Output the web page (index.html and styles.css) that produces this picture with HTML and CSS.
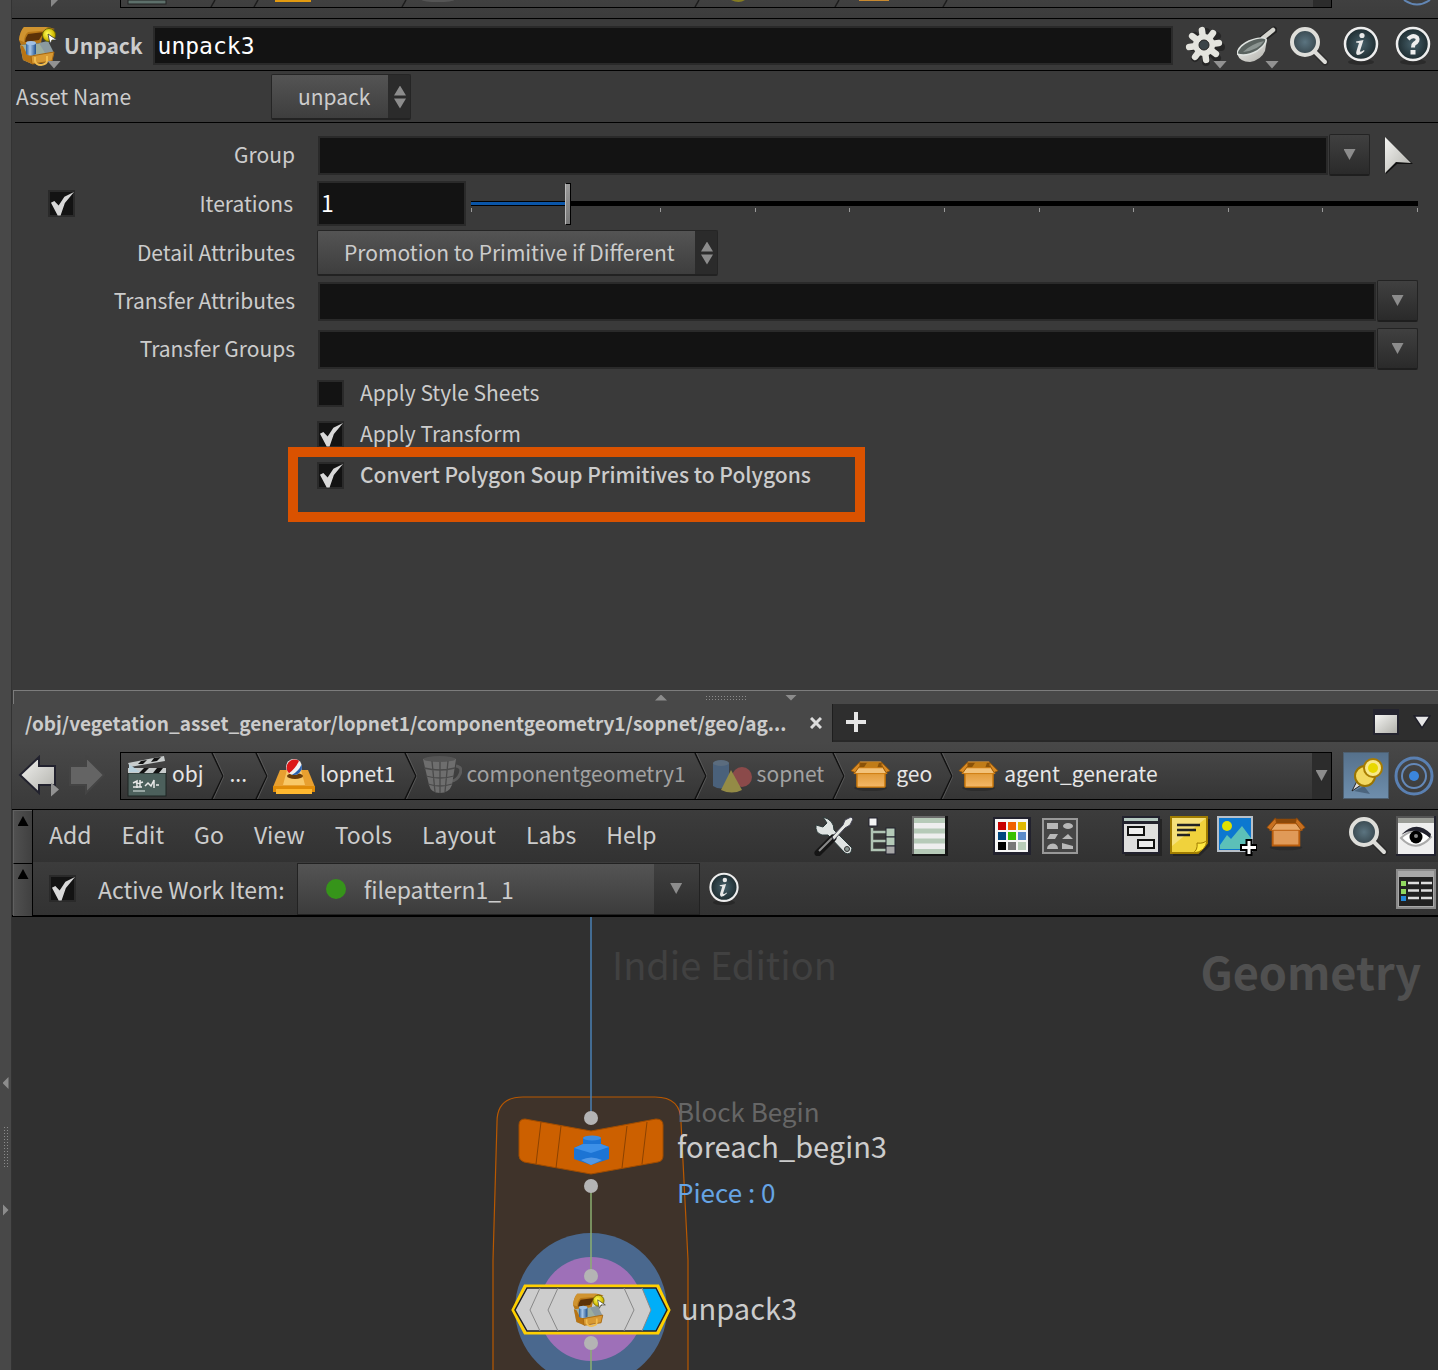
FILE: index.html
```
<!DOCTYPE html>
<html lang="en">
<head>
    <meta charset="UTF-8">
    <title>unpack3</title>
    <link rel="stylesheet" href="styles.css">
</head>
<body>
<!-- shared gradients and symbols -->
<svg class="defs" width="0" height="0" aria-hidden="true">
    <defs>
        <linearGradient id="g-steel" x1="0" y1="0" x2="1" y2="1"><stop offset="0" stop-color="#f4f4f2"/><stop offset="1" stop-color="#b0b0aa"/></linearGradient>
        <linearGradient id="g-gold" x1="0" y1="0" x2="0" y2="1"><stop offset="0" stop-color="#e09a38"/><stop offset="1" stop-color="#f4b868"/></linearGradient>
        <linearGradient id="g-blue" x1="0" y1="0" x2="1" y2="0"><stop offset="0" stop-color="#2a5f9e"/><stop offset=".4" stop-color="#a9c8e8"/><stop offset="1" stop-color="#1d4f90"/></linearGradient>
        <radialGradient id="g-glass"><stop offset="0" stop-color="#5b7480"/><stop offset="1" stop-color="#37464d"/></radialGradient>
        <radialGradient id="g-dark"><stop offset="0" stop-color="#46606a"/><stop offset="1" stop-color="#1e2c30"/></radialGradient>
        <radialGradient id="g-yellow" cx=".4" cy=".4"><stop offset="0" stop-color="#ffff5a"/><stop offset="1" stop-color="#d0b800"/></radialGradient>
    </defs>
    <symbol id="i-chest" viewBox="0 0 40 40">
        <path d="M5 1Q1 5 0 14L2 19L22 17L24 7L36 3Q30 1 28 1L9 1Z" fill="#b87818"/>
        <path d="M5 1Q1 5 0 14L5 16Q5 9 9 6L32 4L27 1L9 1Z" fill="#d09430"/>
        <path d="M9 8Q6 12 6 16L20 14L25 6Z" fill="#5c3208"/>
        <path d="M1 19L24 17L35 27L33 35L13 38L4 34Z" fill="#9cae9f"/>
        <path d="M20 17L29 15L35 27L26 27Z" fill="#8b9aa0"/>
        <path d="M1 19L4 34L13 38L13 30L7 26L4 20Z" fill="#b87414"/>
        <path d="M12 30L35 26L33 35L13 38Z" fill="#d89a34" stroke="#a8660c"/>
        <path d="M16 31V35Q17 39 22 39Q28 38 28 35V30" fill="none" stroke="#f0bc50" stroke-width="2"/>
        <path d="M7 17V28Q11 31 17 28V17Z" fill="url(#g-blue)"/>
        <ellipse cx="12" cy="17" rx="5" ry="2" fill="#9fc0e4"/>
        <circle cx="30" cy="9" r="6.500" fill="url(#g-yellow)" stroke="#6a6400"/>
        <path d="M29 8L38 14L33 14L31 18Z" fill="#fff" stroke="#333" stroke-width=".8"/>
    </symbol>
    <symbol id="i-mag" viewBox="0 0 40 40">
        <path d="M26 26L36 36" stroke="#1b1b1b" stroke-width="7" stroke-linecap="round" opacity=".4"/>
        <path d="M25 25L36 36" stroke="#dcdcd8" stroke-width="4" stroke-linecap="round"/>
        <circle cx="16" cy="16" r="13" fill="url(#g-glass)" stroke="#dededa" stroke-width="4"/>
    </symbol>
    <symbol id="i-info" viewBox="0 0 40 40">
        <ellipse cx="20" cy="36" rx="13" ry="3" fill="#222" opacity=".6"/>
        <circle cx="20" cy="18" r="16" fill="url(#g-dark)" stroke="#eee" stroke-width="2.500"/>
        <circle cx="21" cy="9.500" r="2.600" fill="#e8e8e8"/>
        <path d="M15 15.500L22.500 14L19 25Q19 27 23 24L23.500 25Q20 29 16.500 29Q14.500 28 15.500 25L18 17L15 16.500Z" fill="#e8e8e8"/>
    </symbol>
    <symbol id="i-box" viewBox="0 0 42 32">
        <ellipse cx="21" cy="29" rx="17" ry="3" fill="#222" opacity=".5"/>
        <path d="M7 13H36V27Q36 28 35 28H8Q7 28 7 27Z" fill="url(#g-gold)" stroke="#c87608" stroke-width="1.500"/>
        <path d="M10 2H32L34 9H8Z" fill="#8a5208" stroke="#e8a040"/>
        <path d="M18 2H30L28 8H14Z" fill="#c07c18"/>
        <path d="M8 8H34L38 14H4Z" fill="#f2c27a" stroke="#cf7d10"/>
        <path d="M10 2L1 11L5 13L10 6ZM32 2L41 11L37 13L33 6Z" fill="#d98a24" stroke="#9a5a08"/>
    </symbol>
    <symbol id="i-sep" viewBox="0 0 13 46" preserveAspectRatio="none">
        <path d="M1 0L12 23L1 46" fill="none" stroke="#111" stroke-width="1.500"/>
        <path d="M2.500 0L13 23L2.500 46" fill="none" stroke="#666" stroke-width=".7"/>
    </symbol>
</svg>

<aside class="pane-edge">
    <div class="edge-grip">
        <i class="tri-left"></i>
        <i class="dots"></i>
        <i class="tri-right"></i>
    </div>
</aside>

<main class="desk">
    <section class="params">
        <!-- bottom edge of the parameter pane path bar -->
        <div class="path-stub">
            <div class="stub-nav"><i class="stub-tri"></i></div>
            <div class="stub-box">
                <svg width="1000" height="7" viewBox="0 0 1000 7">
                    <rect x="7" y="0" width="38" height="4" fill="#5d706b" stroke="#222"/>
                    <path d="M94 0L90 7M137 0L133 7M285 0L281 7M578 0L574 7M718 0L714 7M826 0L822 7" stroke="#1c1c1c" stroke-width="1.500"/>
                    <rect x="154" y="0" width="36" height="2" fill="#e39a10"/>
                    <ellipse cx="317" cy="0" rx="16" ry="2" fill="#555"/>
                    <path d="M610 0Q618 4 624 0" fill="#857c22"/>
                    <rect x="738" y="0" width="30" height="1" fill="#c98a30"/>
                </svg>
            </div>
            <svg class="stub-ring" width="42" height="8" viewBox="0 0 42 8"><path d="M8 0Q21 9 34 0" fill="none" stroke="#6286b4" stroke-width="2"/></svg>
        </div>

        <header class="node-head">
            <button class="node-type" aria-label="Node type">
                <svg width="40" height="40"><use href="#i-chest"/></svg>
                <i class="tri-mini"></i>
            </button>
            <label class="node-label" for="node-name">Unpack</label>
            <input class="node-name" id="node-name" type="text" value="unpack3" spellcheck="false">
            <div class="head-tools">
                <button aria-label="Gear menu">
                    <svg width="40" height="40" viewBox="0 0 40 40">
                        <g stroke="#1a1a1a" stroke-width="8" stroke-linecap="round" opacity=".6"><path d="M21 6V36M6 21H36M10 10L32 32M32 10L10 32"/></g>
                        <g transform="rotate(-8 19 19)" stroke="#e4e4de" stroke-width="6.500" stroke-linecap="round"><path d="M19 4V34M4 19H34M8.500 8.500L29.500 29.500M29.500 8.500L8.500 29.500"/></g>
                        <circle cx="19" cy="19" r="11" fill="#e4e4de"/>
                        <circle cx="19" cy="19" r="5" fill="#3b4448" stroke="#222"/>
                    </svg>
                    <i class="tri-mini"></i>
                </button>
                <button aria-label="Takes">
                    <svg width="40" height="40" viewBox="0 0 40 40">
                        <path d="M25 13L37 4" stroke="#222" stroke-width="7" stroke-linecap="round"/>
                        <path d="M26 12L36 4" stroke="#d4d4ce" stroke-width="4.500" stroke-linecap="round"/>
                        <path d="M0 28Q3 36 13 36Q24 34 28 25L30 13Z" fill="url(#g-steel)"/>
                        <path d="M0 28Q1 20 12 15Q25 10 29 13Q30 18 20 25Q9 31 0 28Z" fill="#59625f" stroke="#dfe3e0" stroke-width="1.500"/>
                        <path d="M6 26Q14 18 27 15Q22 24 6 26Z" fill="#8b9491"/>
                    </svg>
                    <i class="tri-mini"></i>
                </button>
                <button aria-label="Search"><svg width="40" height="40"><use href="#i-mag"/></svg></button>
                <button aria-label="Info"><svg width="40" height="40"><use href="#i-info"/></svg></button>
                <button aria-label="Help">
                    <svg width="40" height="40" viewBox="0 0 40 40">
                        <ellipse cx="20" cy="36" rx="13" ry="3" fill="#222" opacity=".6"/>
                        <circle cx="20" cy="18" r="16" fill="url(#g-dark)" stroke="#eee" stroke-width="2.500"/>
                        <path d="M15 13Q20 8 24 11.500Q26 15 21.500 17.500Q20 18.500 20 21.500" fill="none" stroke="#eee" stroke-width="4"/>
                        <rect x="17.500" y="24" width="5" height="4.500" fill="#eee"/>
                    </svg>
                </button>
            </div>
        </header>

        <div class="asset-row">
            <label for="asset">Asset Name</label>
            <div class="drop">
                <select id="asset"><option>unpack</option></select>
                <i class="spin"></i>
            </div>
        </div>

        <form class="parm-list">
            <div class="parm">
                <label class="parm-label" for="group">Group</label>
                <input class="field" id="group" type="text">
                <button class="menu-btn" type="button" aria-label="Group menu"><i class="tri-down"></i></button>
                <button class="pick" type="button" aria-label="Select group">
                    <svg width="32" height="40" viewBox="0 0 32 40"><path d="M4 4L31 29L15 29L4 39Z" fill="#111"/><path d="M3 2L29 28L14 27L3 38Z" fill="url(#g-steel)"/></svg>
                </button>
            </div>
            <div class="parm tall">
                <input class="tick" type="checkbox" checked aria-label="Enable iterations">
                <label class="parm-label" for="iter">Iterations</label>
                <input class="field num" id="iter" type="text" value="1">
                <div class="slider">
                    <input type="range" min="0" max="10" value="1" aria-label="Iterations">
                    <div class="ticks"><i></i><i></i><i></i><i></i><i></i><i></i><i></i><i></i><i></i><i></i><i></i></div>
                </div>
            </div>
            <div class="parm tall">
                <label class="parm-label" for="detail">Detail Attributes</label>
                <div class="drop wide">
                    <select id="detail"><option>Promotion to Primitive if Different</option></select>
                    <i class="spin"></i>
                </div>
            </div>
            <div class="parm">
                <label class="parm-label" for="tattr">Transfer Attributes</label>
                <input class="field" id="tattr" type="text">
                <button class="menu-btn" type="button" aria-label="Attributes menu"><i class="tri-down"></i></button>
            </div>
            <div class="parm">
                <label class="parm-label" for="tgroup">Transfer Groups</label>
                <input class="field" id="tgroup" type="text">
                <button class="menu-btn" type="button" aria-label="Groups menu"><i class="tri-down"></i></button>
            </div>
            <div class="toggles">
                <label><input class="tick" type="checkbox">Apply Style Sheets</label>
                <label><input class="tick" type="checkbox" checked>Apply Transform</label>
                <label class="changed"><input class="tick" type="checkbox" checked>Convert Polygon Soup Primitives to Polygons</label>
                <div class="callout"></div>
            </div>
        </form>
    </section>

    <div class="splitter"><i class="tri-up"></i><i class="dots"></i><i class="tri-dn"></i></div>

    <section class="network">
        <div class="tabs">
            <div class="tab">
                <span>/obj/vegetation_asset_generator/lopnet1/componentgeometry1/sopnet/geo/ag...</span>
                <button aria-label="Close tab"><svg width="12" height="12" viewBox="0 0 12 12"><path d="M1 1L11 11M11 1L1 11" stroke="#ddd" stroke-width="3"/></svg></button>
            </div>
            <button class="tab-add" aria-label="New tab"><svg width="20" height="20" viewBox="0 0 20 20"><path d="M10 0V20M0 10H20" stroke="#e6e6e6" stroke-width="4"/></svg></button>
            <div class="tab-tools">
                <button aria-label="Maximize"><svg width="26" height="26" viewBox="0 0 26 26"><rect width="26" height="26" fill="#24242f"/><rect x="2" y="6" width="22" height="18" fill="url(#g-steel)"/></svg></button>
                <button aria-label="Pane menu"><svg width="18" height="16" viewBox="0 0 18 16"><path d="M1 2H17L9 14Z" fill="#e6e6e6" stroke="#1e1e28" stroke-width="1.500"/></svg></button>
            </div>
        </div>

        <nav class="path-bar">
            <button class="go" aria-label="Back">
                <svg width="40" height="42" viewBox="0 0 40 42"><path d="M2 20L21 2V11H37V30H21V38Z" fill="url(#g-steel)" stroke="#22222e" stroke-width="2"/></svg>
                <i class="tri-side"></i>
            </button>
            <button class="go" aria-label="Forward">
                <svg width="40" height="42" viewBox="0 0 40 42"><path d="M37 20L19 2V11H3V30H19V38Z" fill="#646464" stroke="#444" stroke-width="2"/></svg>
            </button>
            <div class="crumbs">
                <a href="#obj">
                    <svg width="40" height="42" viewBox="0 0 40 42">
                        <rect x="1" y="18" width="38" height="23" fill="#4c605c" stroke="#1c2422"/>
                        <path d="M1 13H39V18H1Z" fill="#c8cccc"/><path d="M12 18L17 13H22L17 18ZM26 18L30 13H36L32 18Z" fill="#111"/>
                        <path d="M1 8L37 1L38 6L3 12Z" fill="#c8cccc"/><path d="M11 9L14 6L20 5L16 9ZM24 7L27 3L34 2L30 6Z" fill="#111"/>
                        <path d="M2 9L13 17H2Z" fill="#b8d0dc"/>
                        <path d="M6 28L10 26V33M13 25V32M9 29L16 27M18 31L21 28L24 31L27 25V33M6 32H15M29 30H32" fill="none" stroke="#e8e8e8" stroke-width="1.500"/>
                        <path d="M6 36H18" stroke="#96a5a2" stroke-width="2"/>
                    </svg>
                    <span>obj</span></a>
                <svg class="sep" width="13" height="46"><use href="#i-sep"/></svg>
                <a href="#more"><span>...</span></a>
                <svg class="sep" width="13" height="46"><use href="#i-sep"/></svg>
                <a href="#lopnet1">
                    <svg width="42" height="40" viewBox="0 0 42 40">
                        <path d="M7 14H35L42 31V34H0V31Z" fill="#e8a030"/>
                        <path d="M14 14H28L32 29H10Z" fill="#f8c868"/>
                        <path d="M0 30H42V36H0Z" fill="#e08c08"/><path d="M3 33H39V38H3Z" fill="#ffb830"/>
                        <ellipse cx="22" cy="20" rx="8" ry="3" fill="#6a3c08"/>
                        <circle cx="21" cy="11" r="8" fill="#f2f2f2"/>
                        <path d="M16 17.200A8 8 0 0 1 26 4.800Q23 12 16 17.200Z" fill="#dc1818"/>
                        <path d="M28.500 8.500A8 8 0 0 1 19 18.700Q26 15 28.500 8.500Z" fill="#2860b0"/>
                    </svg>
                    <span>lopnet1</span></a>
                <svg class="sep" width="13" height="46"><use href="#i-sep"/></svg>
                <a class="dim" href="#componentgeometry1">
                    <svg width="40" height="42" viewBox="0 0 40 42">
                        <path d="M34 11Q41 12 38 19Q35 26 29 26" fill="none" stroke="#5c5c5c" stroke-width="3"/>
                        <path d="M1 4Q18 0 34 4L30 30Q27 38 18 38Q9 38 7 30Z" fill="#6e6e6e"/>
                        <ellipse cx="17.500" cy="4" rx="16" ry="3" fill="#555"/>
                        <path d="M10 6L13 37M18 7V38M26 6L23 37M2 13Q18 17 33 13M4 21Q18 25 32 21M6 29Q18 33 30 29" fill="none" stroke="#4a4a4a" stroke-width="1.300"/>
                    </svg>
                    <span>componentgeometry1</span></a>
                <svg class="sep" width="13" height="46"><use href="#i-sep"/></svg>
                <a class="dim" href="#sopnet">
                    <svg width="40" height="36" viewBox="0 0 40 36">
                        <path d="M1 5V28Q9 33 17 28V5Z" fill="#4a617b"/><ellipse cx="9" cy="5" rx="8" ry="3" fill="#5b6c7e"/>
                        <circle cx="30" cy="19" r="10" fill="#8b4a4a"/>
                        <path d="M19 12L30 32Q20 37 9 32Z" fill="#948b46"/>
                    </svg>
                    <span>sopnet</span></a>
                <svg class="sep" width="13" height="46"><use href="#i-sep"/></svg>
                <a href="#geo"><svg width="41" height="31"><use href="#i-box"/></svg><span>geo</span></a>
                <svg class="sep" width="13" height="46"><use href="#i-sep"/></svg>
                <a href="#agent_generate"><svg width="41" height="31"><use href="#i-box"/></svg><span>agent_generate</span></a>
                <button class="crumb-menu" aria-label="Path history"><i class="tri-down"></i></button>
            </div>
            <button class="pin" aria-label="Pin">
                <svg width="44" height="44" viewBox="0 0 44 44">
                    <path d="M10 37L26 40L20 32Z" fill="#3e566c" opacity=".7"/>
                    <path d="M8 37L13 27L17 31Z" fill="#ddd" stroke="#222"/>
                    <circle cx="21" cy="22" r="10" fill="#f2d860" stroke="#9a7400" stroke-width="2"/>
                    <circle cx="29" cy="14" r="9" fill="#f8e888" stroke="#a87c00" stroke-width="2"/>
                    <circle cx="29" cy="14" r="5" fill="#e8d800"/>
                </svg>
            </button>
            <button class="link" aria-label="Link group">
                <svg width="42" height="42" viewBox="0 0 42 42" fill="none">
                    <circle cx="21" cy="21" r="18" stroke-width="3" stroke="#5a80b2"/><circle cx="21" cy="21" r="12" stroke-width="2" stroke="#6488b8"/><circle cx="21" cy="21" r="5" fill="#3b86dc"/>
                </svg>
            </button>
        </nav>

        <div class="bars">
            <div class="grips"><button aria-label="Collapse menu bar"></button><button aria-label="Collapse work item bar"></button></div>
            <div class="bar-rows">
                <div class="menu-bar">
                    <nav class="menus">
                        <a href="#add">Add</a><a href="#edit">Edit</a><a href="#go">Go</a><a href="#view">View</a><a href="#tools">Tools</a><a href="#layout">Layout</a><a href="#labs">Labs</a><a href="#help">Help</a>
                    </nav>
                    <div class="tools">
                        <button aria-label="Tools">
                            <svg width="40" height="40" viewBox="0 0 40 40">
                                <path d="M9 1L13 7L9 11L2 9Q1 17 8 19L14 19L31 37Q37 40 38 32L20 14Q20 4 9 1Z" fill="#dfe3e2" stroke="#2c3a3a"/>
                                <circle cx="33" cy="33" r="2.500" fill="#8a9692" stroke="#333"/>
                                <path d="M4 37L19 22" stroke="#151515" stroke-width="7" stroke-linecap="round"/><path d="M5 35L18 22" stroke="#8a8a8a" stroke-width="2"/>
                                <path d="M18 21L29 9L31 4L37 1L39 3L36 9L31 12L20 24Z" fill="#e6e8e4" stroke="#445"/>
                            </svg>
                        </button>
                        <button aria-label="Tree view">
                            <svg width="32" height="40" viewBox="0 0 32 40">
                                <rect x="3" y="2" width="8" height="8" fill="#f4f4f4" stroke="#22222e"/>
                                <path d="M6 12V34H22M6 16H22M6 25H22" fill="none" stroke="#b0c4b4" stroke-width="2.500"/>
                                <g fill="#b4cab8" stroke="#22222e"><rect x="20" y="12" width="9" height="9"/><rect x="20" y="21" width="9" height="9"/><rect x="20" y="30" width="9" height="8" fill="#a6a6a6"/></g>
                            </svg>
                        </button>
                        <button aria-label="List view">
                            <svg width="36" height="40" viewBox="0 0 36 40"><rect width="36" height="40" fill="#151515"/><rect width="33" height="38" fill="#6a6a6a"/><rect x="2" y="2" width="31" height="36" fill="#eee"/><path d="M2 4.500H33M2 15H33M2 25H33M2 35.500H33" stroke="#b6cab8" stroke-width="5"/></svg>
                        </button>
                        <button class="gap-wide" aria-label="Color palette">
                            <svg width="38" height="38" viewBox="0 0 38 38"><rect width="38" height="38" fill="#22222e"/><rect x="2" y="2" width="33" height="33" fill="#f6f6f6"/>
                                <rect x="5" y="5" width="8" height="8" fill="#c80000"/><rect x="15" y="5" width="8" height="8" fill="#f06000"/><rect x="25" y="5" width="8" height="8" fill="#e0b800"/>
                                <rect x="5" y="15" width="8" height="8" fill="#004880"/><rect x="15" y="15" width="8" height="8" fill="#38c000"/><rect x="25" y="15" width="8" height="8" fill="#5a8ac8"/>
                                <rect x="5" y="25" width="8" height="8" fill="#000"/><rect x="15" y="25" width="8" height="8" fill="#787878"/><rect x="25" y="25" width="8" height="8" fill="#b8ccb8"/>
                            </svg>
                        </button>
                        <button aria-label="Node shapes">
                            <svg width="36" height="36" viewBox="0 0 36 36"><rect x="1" y="1" width="34" height="34" fill="#464646" stroke="#989898" stroke-width="2"/><g fill="#b8b8b8"><rect x="5" y="5" width="11" height="6"/><ellipse cx="26" cy="8" rx="5" ry="3"/><path d="M8 16H16L13 21H5ZM26 16L31 21H20ZM5 31Q5 26 11 25.500Q16 26 16 31ZM20 25L31 28V31H20Z"/></g></svg>
                        </button>
                        <button class="gap-wide" aria-label="Network box">
                            <svg width="40" height="40" viewBox="0 0 40 40"><rect x="3" y="3" width="37" height="37" fill="#242424"/><rect width="38" height="38" fill="#22222e"/><rect x="2" y="2" width="34" height="3" fill="#b4c8c0"/><rect x="2" y="8" width="34" height="28" fill="#dedede"/><g fill="#eee" stroke="#111" stroke-width="2"><rect x="6" y="11" width="16" height="8"/><rect x="16" y="24" width="16" height="8"/></g></svg>
                        </button>
                        <button aria-label="Sticky note">
                            <svg width="40" height="40" viewBox="0 0 40 40"><path d="M3 3H40V30L30 40H3Z" fill="#262626"/><path d="M1 1H37V27L28 37H1Z" fill="#f0d23c" stroke="#a07c00" stroke-width="2"/><path d="M2 2H36L2 30Z" fill="#f8e488" opacity=".8"/><path d="M37 24Q34 28 27 27Q28 34 23 37Q36 36 37 24Z" fill="#ffe840" stroke="#a07c00"/><path d="M7 9H30M7 14H26M7 19H20" stroke="#222" stroke-width="2.500"/></svg>
                        </button>
                        <button aria-label="Background image">
                            <svg width="42" height="40" viewBox="0 0 42 40"><rect x="1" y="1" width="34" height="34" fill="#0c78d0" stroke="#b8c0c8" stroke-width="2"/><circle cx="10" cy="10" r="5" fill="#e0e000"/><path d="M3 29L10 19L14 23L25 10L34 22V33H3Z" fill="#5cc0b8"/><path d="M32 23V40M23 31.500H40" stroke="#000" stroke-width="7"/><path d="M32 25V38M25 31.500H39" stroke="#fff" stroke-width="3"/></svg>
                        </button>
                        <button aria-label="Asset"><svg width="40" height="40" viewBox="0 4 42 40">
                            <ellipse cx="21" cy="36" rx="17" ry="3" fill="#222" opacity=".5"/><path d="M7 16H35V34H7Z" fill="#e09a58" stroke="#b85c0c" stroke-width="2"/><path d="M10 6H32L35 11H7Z" fill="#8c4808"/><path d="M7 11H35L38 18H4Z" fill="#e8a868" stroke="#b85c0c"/><path d="M10 5L1 15L5 18L11 10ZM32 5L41 15L37 18L31 10Z" fill="#c87020" stroke="#8c4808"/>
                        </svg></button>
                        <button class="gap-wide" aria-label="Find"><svg width="40" height="40"><use href="#i-mag"/></svg></button>
                        <button aria-label="Display options">
                            <svg width="40" height="40" viewBox="0 0 40 40"><rect width="40" height="40" fill="#22222e"/><rect width="38" height="38" fill="#555"/><rect x="2" y="2" width="36" height="36" fill="#eee"/><rect x="2" y="2" width="36" height="5" fill="#9a9c96"/><path d="M5 22Q20 8 35 21Q20 38 5 22Z" fill="#fff" stroke="#aaa" stroke-width="2"/><circle cx="20" cy="21" r="6.500" fill="#000"/><circle cx="20" cy="20" r="2" fill="#888"/><path d="M5 19Q20 3 35 18L34 22Q20 9 5 19Z" fill="#22222e"/></svg>
                        </button>
                    </div>
                </div>
                <div class="work-bar">
                    <label class="active-item"><input class="tick" type="checkbox" checked>Active Work Item:</label>
                    <button class="work-menu"><i class="dot"></i>filepattern1_1<span class="work-arrow"><i class="tri-down"></i></span></button>
                    <button class="work-info" aria-label="Work item info"><svg width="34" height="34"><use href="#i-info"/></svg></button>
                    <button class="work-list" aria-label="Work item list">
                        <svg width="40" height="40" viewBox="0 0 40 40"><rect width="40" height="40" fill="#8a8a8a"/><rect x="2" y="2" width="36" height="36" fill="#a8a8a8"/><rect x="3" y="8" width="34" height="29" fill="#222"/><path d="M12 14H23M25 14H36M12 21.500H23M25 21.500H36M12 29H23M25 29H36" stroke="#ddd" stroke-width="2.500"/><rect x="5" y="12" width="5" height="5" fill="#90d860"/><rect x="5" y="20" width="5" height="5" fill="#90d860"/><rect x="5" y="27" width="5" height="5" fill="#2488d8"/></svg>
                    </button>
                </div>
            </div>
        </div>

        <div class="canvas">
            <div class="edition">Indie Edition</div>
            <div class="context">Geometry</div>
            <!-- foreach block, wires and the two nodes -->
            <svg class="graph" width="220" height="453" viewBox="0 0 220 453">
                <path d="M13 470V343L17 205Q17 180 43 180H175Q201 180 201 205L208 343V470Z" fill="#3f332a" stroke="#b85800" stroke-width="1.200"/>
                <path d="M111 0V200" stroke="#4a80b4" stroke-width="1.500"/>
                <circle cx="111" cy="392" r="76" fill="#4a688e"/>
                <circle cx="111" cy="392" r="52" fill="#9e70b8"/>
                <path d="M111 270V358M111 426V453" stroke="#8aae70" stroke-width="1.500"/>
                <path d="M45 202L111 214L176 202Q183 202 183 208V239Q183 244 178 245L111 257L44 245Q39 243 39 239V208Q39 202 45 202Z" fill="#cc6000" stroke="#a04c00"/>
                <path d="M61 205L56 247M81 209L76 251M147 209L142 251M167 205L162 247" stroke="#8c4200" fill="none"/>
                <path d="M94 231L103 227V221Q111 217 121 221V227L129 230V242L111 248L94 242Z" fill="#1c74d4"/>
                <ellipse cx="112" cy="221" rx="9" ry="2.500" fill="#3c8ce0"/>
                <path d="M94 231L111 236L129 230L121 227H103Z" fill="#3c90e8"/>
                <path d="M101 243Q111 238 122 243L111 248Z" fill="#6aa8ec" opacity=".7"/>
                <path d="M45 369H178L189 393L178 416H45L33 393Z" fill="#cdcdcd" stroke="#ffd000" stroke-width="3"/>
                <path d="M162 371H176L187 393L176 414H162L171 393Z" fill="#00aef8"/>
                <path d="M47 371H176L187 393L176 414H47L35 393Z" fill="none" stroke="#222" stroke-width="1.500"/>
                <path d="M60 371L50 393L60 414M78 371L68 393L78 414M144 371L154 393L144 414M162 371L171 393L162 414" fill="none" stroke="#888"/>
                <use href="#i-chest" x="93" y="376" width="34" height="34"/>
                <g fill="#b4b4b4"><circle cx="111" cy="201" r="7"/><circle cx="111" cy="269" r="7"/><circle cx="111" cy="359" r="7"/><circle cx="111" cy="426" r="7"/></g>
            </svg>
            <div class="node-text begin"><p class="kind">Block Begin</p><p>foreach_begin3</p><p class="piece">Piece : 0</p></div>
            <div class="node-text unpack"><p>unpack3</p></div>
        </div>
    </section>
</main>
</body>
</html>
```
FILE: styles.css
```
*{
    box-sizing: border-box;
}
body{
    margin: 0;
    min-height: 100vh;
    display: flex;
    background: #3a3a3a;
    color: #ccc;
    font-family: "Noto Sans CJK SC", "Open Sans", sans-serif;
    font-size: 21px;
    line-height: 32px;
    overflow-x: hidden;
}
button, input, select{
    margin: 0;
    padding: 0;
    border: 0;
    background: none;
    color: inherit;
    font: inherit;
}
button{
    display: flex;
    align-items: center;
    justify-content: center;
    position: relative;
}
a{
    color: inherit;
    text-decoration: none;
}
p{
    margin: 0;
}
svg{
    display: block;
    flex: none;
}
.defs{
    position: absolute;
}
/*small triangles*/
.tri-mini, .tri-side{
    position: absolute;
    right: -2px;
    bottom: -3px;
    width: 14px;
    height: 8px;
    background: #929292;
    clip-path: polygon(0 0, 100% 0, 50% 100%);
}
.tri-side{
    width: 8px;
    height: 14px;
    right: 8px;
    bottom: 0;
    clip-path: polygon(0 0, 100% 50%, 0 100%);
}
.tri-down{
    width: 12px;
    height: 11px;
    background: #8c8c8c;
    clip-path: polygon(0 0, 100% 0, 50% 100%);
}
/*left edge of the pane*/
.pane-edge{
    flex: none;
    width: 12px;
    background: #484848;
    border-right: 1px solid #333;
    display: flex;
    flex-direction: column;
    justify-content: flex-end;
    padding-bottom: 154px;
}
.edge-grip{
    display: flex;
    flex-direction: column;
    align-items: center;
    justify-content: space-between;
    height: 139px;
}
.edge-grip .dots{
    width: 6px;
    height: 42px;
}
.dots{
    background: radial-gradient(circle, #8c8c8c 1px, transparent 1px) 0 0 / 3px 3px;
}
.tri-left, .tri-right{
    width: 6px;
    height: 12px;
    background: #8c8c8c;
    clip-path: polygon(100% 0, 100% 100%, 0 50%);
}
.tri-right{
    clip-path: polygon(0 0, 100% 50%, 0 100%);
}
.desk{
    flex: 1;
    min-width: 0;
    display: flex;
    flex-direction: column;
}
/*parameter pane*/
.params{
    padding-bottom: 194px;
}
.path-stub{
    display: flex;
    height: 19px;
    border-bottom: 1px solid #000;
    background: linear-gradient(#404040, #3c3c3c);
}
.stub-nav{
    width: 108px;
    padding-left: 39px;
}
.stub-tri{
    display: block;
    width: 7px;
    height: 7px;
    background: #888;
    clip-path: polygon(0 0, 100% 0, 0 100%);
}
.stub-box{
    flex: 1;
    height: 8px;
    overflow: hidden;
    border: solid #000;
    border-width: 0 1px 1px;
    background: linear-gradient(90deg, transparent calc(100% - 18px), #2c2c2c 0);
}
.stub-ring{
    margin-left: 64px;
}
.node-head{
    display: flex;
    align-items: center;
    height: 52px;
    margin-left: 3px;
    padding: 2px 5px 0 4px;
    border-bottom: 1px solid #000;
}
.node-type{
    margin-right: 5px;
}
.node-label{
    padding-bottom: 1px;
    font-weight: 700;
}
.node-name{
    flex: 1;
    min-width: 0;
    height: 39px;
    margin-left: 10px;
    padding-left: 3px;
    border: 2px solid #2a2a2a;
    background: #131313;
    color: #fff;
    font-family: "DejaVu Sans Mono", monospace;
    font-size: 23px;
}
.head-tools{
    display: flex;
    gap: 12px;
    margin-left: 12px;
}
.asset-row{
    display: flex;
    align-items: center;
    height: 52px;
    margin-left: 3px;
    border-bottom: 1px solid #000;
}
.asset-row label{
    width: 256px;
    padding: 0 0 1px 1px;
}
.drop{
    position: relative;
    width: 140px;
}
.drop.wide{
    width: 401px;
}
.drop select{
    display: block;
    appearance: none;
    width: 100%;
    height: 46px;
    padding-left: 26px;
    border: 1px solid #252525;
    border-bottom: 2px solid #222;
    border-radius: 2px;
    background: linear-gradient(90deg, transparent calc(100% - 22px), #2b2b2b 0), linear-gradient(#545454, #3e3e3e);
}
/*up and down arrows over the select*/
.spin{
    position: absolute;
    right: 5px;
    top: 12px;
    width: 12px;
    height: 23px;
    background: #8c8c8c;
    clip-path: polygon(50% 0, 100% 44%, 0 44%, 0 56%, 100% 56%, 50% 100%, 0 56%, 0 44%);
    pointer-events: none;
}
.parm-list{
    padding: 8px 20px 0 0;
}
.parm{
    display: flex;
    align-items: center;
    height: 48px;
}
.parm.tall{
    height: 49px;
}
.parm-label{
    width: 283px;
    margin-right: 22px;
    padding-bottom: 2px;
    text-align: right;
}
.parm > .tick{
    margin: 0 0 0 36px;
}
.tick + .parm-label{
    width: 218px;
    margin-right: 24px;
}
.field{
    flex: 1;
    min-width: 0;
    height: 39px;
    margin-left: 1px;
    padding-left: 2px;
    border: 2px solid #2a2a2a;
    background: #131313;
    color: #fff;
}
.field.num{
    flex: none;
    width: 149px;
    height: 45px;
    margin-left: 0;
    padding-bottom: 4px;
    font-size: 23px;
}
.menu-btn{
    width: 41px;
    height: 42px;
    margin-left: 1px;
    border: 1px solid #232323;
    border-bottom: 2px solid #1e1e1e;
    border-radius: 2px;
    background: linear-gradient(#404040, #2a2a2a);
}
.pick{
    width: 32px;
    margin-left: 12px;
    margin-right: 4px;
}
.slider{
    flex: 1;
    height: 42px;
    margin-left: 5px;
    position: relative;
}
.slider input{
    appearance: none;
    display: block;
    width: 100%;
    height: 42px;
    background: linear-gradient(90deg, #0a55a8 10%, #000 0) 0 19px / 100% 3px no-repeat, linear-gradient(#000, #000) 0 18px / 100% 5px no-repeat;
}
.slider input::-webkit-slider-thumb{
    appearance: none;
    width: 6px;
    height: 42px;
    border: 1px solid #000;
    border-left-color: #bbb;
    background: linear-gradient(#9a9a9a, #777);
}
.ticks{
    position: absolute;
    left: 0;
    right: 0;
    top: 25px;
    display: flex;
    justify-content: space-between;
    pointer-events: none;
}
.ticks i{
    width: 1px;
    height: 4px;
    background: #999;
}
.ticks i:nth-child(2){
    visibility: hidden;
}
/*check boxes*/
.tick{
    appearance: none;
    flex: none;
    width: 27px;
    height: 27px;
    border: 2px solid #2a2a2a;
    background: #131313;
}
.tick:checked:before{
    content: "";
    display: block;
    width: 24px;
    height: 24px;
    background: #d8d8d8;
    clip-path: polygon(4% 45%, 18% 38%, 36% 56%, 60% 20%, 100% 0, 62% 46%, 44% 98%, 32% 98%);
}
.toggles{
    position: relative;
    display: flex;
    flex-direction: column;
    align-items: flex-start;
    padding-left: 305px;
}
.toggles label{
    display: flex;
    align-items: center;
    gap: 16px;
    height: 41px;
    padding-bottom: 4px;
}
.toggles .tick{
    margin-top: 4px;
}
.toggles .changed{
    font-weight: 500;
}
/*highlight frame over the last toggle*/
.callout{
    position: absolute;
    left: 276px;
    top: 74px;
    width: 577px;
    height: 75px;
    border: 10px solid #da5200;
    pointer-events: none;
}
.splitter{
    display: flex;
    justify-content: center;
    align-items: center;
    gap: 38px;
    height: 14px;
    margin-left: 1px;
    border: solid #7c7c7c;
    border-width: 1px 0 0 1px;
    background: #484848;
}
.splitter .dots{
    width: 42px;
    height: 6px;
}
.tri-up, .tri-dn{
    width: 12px;
    height: 6px;
    background: #8c8c8c;
    clip-path: polygon(50% 0, 100% 100%, 0 100%);
}
.tri-dn{
    clip-path: polygon(0 0, 100% 0, 50% 100%);
}
/*network pane*/
.network{
    flex: 1;
    display: flex;
    flex-direction: column;
}
.tabs{
    display: flex;
    align-items: center;
    height: 38px;
    background: #2e2e2e;
    border-bottom: 2px solid #282828;
}
.tab{
    display: flex;
    align-items: center;
    gap: 24px;
    height: 38px;
    margin-bottom: -2px;
    padding: 0 10px 0 13px;
    border-right: 1px solid #1e1e1e;
    background: #484848;
    font-size: 19px;
    font-weight: 700;
    white-space: nowrap;
}
.tab-add{
    margin-left: 13px;
}
.tab-tools{
    display: flex;
    align-items: center;
    gap: 14px;
    margin-left: auto;
    padding-right: 7px;
}
.path-bar{
    display: flex;
    align-items: center;
    height: 68px;
    padding-left: 6px;
    border-bottom: 1px solid #000;
    background: linear-gradient(#484848, #3a3a3a);
}
.go{
    width: 49px;
    justify-content: flex-start;
}
.crumbs{
    flex: 1;
    min-width: 0;
    display: flex;
    align-items: center;
    height: 48px;
    margin-left: 4px;
    padding-left: 6px;
    border: 1px solid #000;
    background: linear-gradient(#464646, #353535);
    color: #e6e6e6;
}
.crumbs a{
    display: flex;
    align-items: center;
    gap: 5px;
}
.crumbs span{
    padding-bottom: 5px;
}
.crumbs a.dim{
    color: #a2a2a2;
}
.sep{
    margin: 0 5px 0 8px;
}
.crumb-menu{
    width: 19px;
    height: 46px;
    margin-left: auto;
    background: #2c2c2c;
}
.pin{
    width: 46px;
    height: 47px;
    margin-left: 11px;
    border: 1px solid #4d5f70;
    background: linear-gradient(#56718c, #6e8eac);
}
.link{
    margin-left: 4px;
    margin-right: 3px;
}
.bars{
    display: flex;
    height: 107px;
    border-bottom: 2px solid #000;
}
.grips{
    flex: none;
    width: 21px;
    padding-left: 1px;
    border-right: 1px solid #000;
}
.grips button{
    width: 100%;
    height: 53px;
    align-items: flex-start;
    padding-top: 5px;
    border: solid #606060;
    border-width: 1px 0 0 1px;
    background: linear-gradient(90deg, #505050, #404040);
}
.grips button:before{
    content: "";
    width: 11px;
    height: 10px;
    background: #000;
    clip-path: polygon(50% 0, 100% 100%, 0 100%);
}
.grips button + button{
    border-top-color: #000;
}
.bar-rows{
    flex: 1;
    min-width: 0;
    font-size: 23px;
}
.menu-bar, .work-bar{
    display: flex;
    align-items: center;
    height: 52px;
    background: linear-gradient(#3c3c3c, #323232);
}
.menus{
    display: flex;
    gap: 30px;
    padding: 0 0 4px 16px;
}
.tools{
    display: flex;
    align-items: center;
    gap: 8px;
    margin-left: auto;
    padding-right: 2px;
}
.tools button{
    width: 40px;
}
.tools .gap-wide{
    margin-left: 34px;
}
.work-bar{
    height: 53px;
    padding-right: 2px;
}
.active-item{
    display: flex;
    align-items: center;
    gap: 22px;
    padding-left: 16px;
}
.work-menu{
    justify-content: flex-start;
    width: 403px;
    height: 52px;
    margin-left: 12px;
    padding-left: 28px;
    border: 1px solid #222;
    background: linear-gradient(#545454, #3c3c3c);
}
.work-arrow{
    display: flex;
    align-items: center;
    justify-content: center;
    width: 45px;
    height: 50px;
    margin-left: auto;
    background: linear-gradient(#404040, #2c2c2c);
}
.dot{
    width: 20px;
    height: 20px;
    margin-right: 18px;
    border-radius: 50%;
    background: #36941a;
}
.work-info{
    margin-left: 7px;
}
.work-list{
    margin-left: auto;
}
.canvas{
    flex: 1;
    min-height: 453px;
    position: relative;
    overflow: hidden;
    background: #303030;
    font-size: 29px;
}
.edition, .context, .graph, .node-text{
    position: absolute;
}
.edition{
    left: 600px;
    top: 18px;
    font-size: 38px;
    line-height: 58px;
    color: #414141;
}
.context{
    right: 17px;
    top: 25px;
    font-size: 45px;
    font-weight: 700;
    line-height: 58px;
    color: #505050;
}
.graph{
    left: 468px;
    top: 0;
}
.node-text{
    left: 665px;
    line-height: 34px;
}
.node-text.begin{
    top: 177px;
}
.node-text.unpack{
    top: 373px;
    left: 669px;
}
.kind{
    font-size: 26px;
    color: #666;
}
.piece{
    margin-top: 13px;
    font-size: 26px;
    color: #66a4e4;
}
```
